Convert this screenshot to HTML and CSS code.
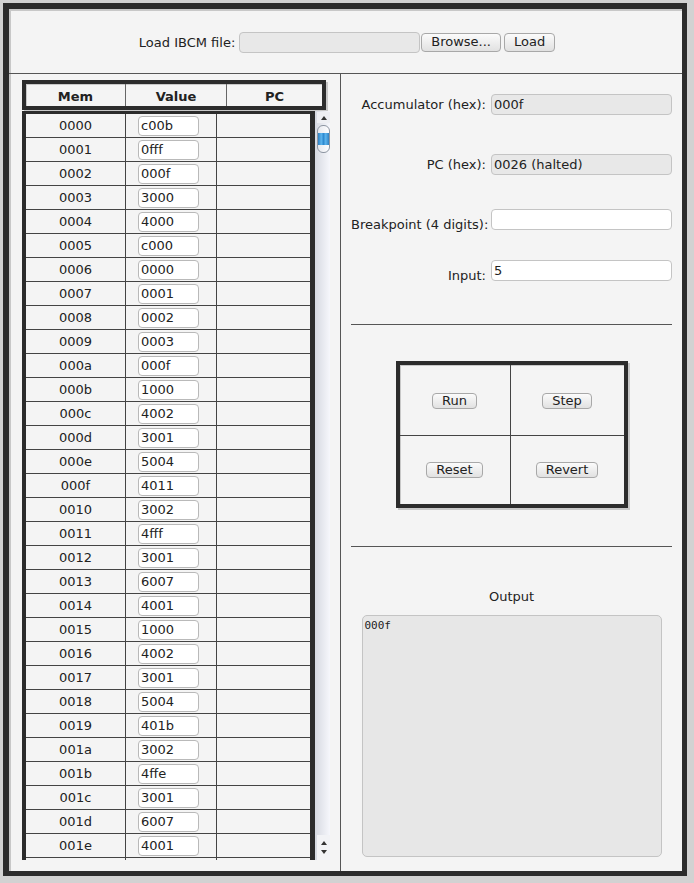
FILE: index.html
```html
<!DOCTYPE html>
<html>
<head>
    <meta name="viewport" content="width=device-width, initial-scale=1.0">
    <link rel="stylesheet" href="styles.css">
</head>
<body>
    <div class="frame">
        <div class="loader">
            <span class="loader-label">Load IBCM file:</span>
            <span class="file-box"></span>
            <button class="btn btn-tall">Browse...</button>
            <button class="btn btn-tall load-btn">Load</button>
        </div>
        <div class="main">
            <div class="memory">
                <div class="mem-head">
                    <div class="head-cell head-mem">Mem</div>
                    <div class="head-cell head-val">Value</div>
                    <div class="head-cell head-pc">PC</div>
                </div>
                <div class="mem-scroll">
                    <div class="mem-table" id="memBody"></div>
                    <div class="scrollbar">
                        <div class="sb-top"><span class="tri-up"></span></div>
                        <div class="sb-thumb"><div class="sb-grip"></div></div>
                        <div class="sb-track"></div>
                        <div class="sb-bottom">
                            <span class="tri-up"></span>
                            <span class="tri-down"></span>
                        </div>
                    </div>
                </div>
            </div>
            <div class="controls">
                <div class="field field-acc">
                    <label class="field-label">Accumulator (hex):</label>
                    <input class="field-input readonly" value="000f" readonly>
                </div>
                <div class="field field-pc">
                    <label class="field-label">PC (hex):</label>
                    <input class="field-input readonly" value="0026 (halted)" readonly>
                </div>
                <div class="field field-bp">
                    <label class="field-label low">Breakpoint (4 digits):</label>
                    <input class="field-input" value="">
                </div>
                <div class="field field-in">
                    <label class="field-label low">Input:</label>
                    <input class="field-input" value="5">
                </div>
                <hr class="rule rule-top">
                <div class="run-grid">
                    <div class="run-cell cell-tl"><button class="btn">Run</button></div>
                    <div class="run-cell cell-tr"><button class="btn">Step</button></div>
                    <div class="run-cell cell-bl"><button class="btn">Reset</button></div>
                    <div class="run-cell cell-br"><button class="btn">Revert</button></div>
                </div>
                <hr class="rule rule-bottom">
                <div class="output-label">Output</div>
                <textarea class="output" readonly>000f</textarea>
            </div>
        </div>
    </div>

    <script>
        const memory = [
            'c00b', '0fff', '000f', '3000', '4000', 'c000', '0000', '0001',
            '0002', '0003', '000f', '1000', '4002', '3001', '5004', '4011',
            '3002', '4fff', '3001', '6007', '4001', '1000', '4002', '3001',
            '5004', '401b', '3002', '4ffe', '3001', '6007', '4001', '1000'
        ];

        const memBody = document.getElementById('memBody');
        memory.forEach((value, addr) => {
            const row = document.createElement('div');
            row.className = 'mem-row';
            row.innerHTML = `
                <div class="mem-addr">${addr.toString(16).padStart(4, '0')}</div>
                <div class="mem-val"><input class="cell-input" value="${value}"></div>
                <div class="mem-pc"></div>
            `;
            memBody.appendChild(row);
        });
    </script>
</body>
</html>
```

FILE: styles.css
```css
body {
    margin: 0;
    background: #d2d2d2;
    font-family: "DejaVu Sans", Verdana, sans-serif;
    font-size: 13px;
    color: #222;
}
.frame {
    margin: 3px 0 0 3px;
    width: 684px;
    height: 873px;
    box-sizing: border-box;
    border-style: solid;
    border-color: #2c2c2c;
    border-width: 6px 5px 5px 6px;
    box-shadow: inset 2px 2px 0 #c8c8c8;
    background: #f4f4f4;
    display: flex;
    flex-direction: column;
}
.loader {
    height: 65px;
    flex-shrink: 0;
    box-sizing: border-box;
    padding: 2px 0 0 3px;
    border-bottom: 1px solid #555;
    display: flex;
    align-items: center;
    justify-content: center;
}
.loader-label {
    margin-right: 4px;
}
.file-box {
    width: 179px;
    height: 19px;
    background: #e8e8e8;
    border: 1px solid #c4c4c4;
    border-radius: 4px;
    margin-right: 1px;
}
.load-btn {
    margin-left: 3px;
}
.btn {
    font-family: "DejaVu Sans", Verdana, sans-serif;
    font-size: 13px;
    color: #222;
    background: linear-gradient(#fbfbfb, #e1e1e1);
    border: 1px solid #a8a8a8;
    border-radius: 4px;
    padding: 0 9px;
    height: 16px;
    line-height: 14px;
    cursor: pointer;
}
.btn-tall {
    height: 19px;
    line-height: 16px;
}
.main {
    flex: 1;
    display: flex;
    min-height: 0;
}
.memory {
    width: 332px;
    box-sizing: border-box;
    padding: 6px 0 0 13px;
    border-right: 1px solid #555;
}
.mem-head {
    width: 304px;
    height: 30px;
    box-sizing: border-box;
    border: 4px solid #2c2c2c;
    box-shadow: 2px 2px 0 #c8c8c8, inset 1px 1px 0 #c8c8c8;
    display: flex;
}
.head-cell {
    font-weight: bold;
    text-align: center;
    line-height: 19px;
    padding-top: 3px;
}
.head-mem {
    width: 100px;
    box-sizing: border-box;
    border-right: 1px solid #666;
}
.head-val {
    width: 101px;
    box-sizing: border-box;
    border-right: 1px solid #666;
}
.head-pc {
    flex: 1;
}
.mem-scroll {
    margin-top: 1px;
    width: 308px;
    height: 749px;
    display: flex;
}
.mem-table {
    width: 293px;
    box-sizing: border-box;
    border-style: solid;
    border-color: #2c2c2c;
    border-width: 3px 5px 0 4px;
    overflow: hidden;
}
.mem-row {
    display: flex;
    height: 24px;
    flex-shrink: 0;
    box-sizing: border-box;
    border-bottom: 1px solid #444;
}
.mem-addr {
    width: 100px;
    box-sizing: border-box;
    border-right: 1px solid #444;
    text-align: center;
    line-height: 23px;
}
.mem-val {
    width: 91px;
    box-sizing: border-box;
    border-right: 1px solid #444;
    padding-left: 12px;
    display: flex;
    align-items: center;
}
.mem-pc {
    flex: 1;
}
.cell-input {
    width: 61px;
    height: 20px;
    box-sizing: border-box;
    border: 1px solid #b9b9b9;
    border-radius: 4px;
    background: #fff;
    padding: 0 2px;
    font-family: "DejaVu Sans", Verdana, sans-serif;
    font-size: 13px;
    color: #222;
}
.scrollbar {
    width: 15px;
    display: flex;
    flex-direction: column;
    background: linear-gradient(to right, #d6d9e1, #f6f7fc);
}
.sb-top {
    height: 11px;
    margin: 1px 0 0 2px;
    background: #eeeff3;
    display: flex;
    justify-content: center;
    align-items: center;
}
.tri-up, .tri-down {
    width: 0;
    height: 0;
    border-left: 3px solid transparent;
    border-right: 3px solid transparent;
}
.tri-up {
    border-bottom: 4px solid #333;
}
.tri-down {
    border-top: 4px solid #333;
}
.sb-thumb {
    margin: 2px 0 0 2px;
    height: 28px;
    box-sizing: border-box;
    border: 1px solid #8d95a2;
    border-radius: 6px;
    background: linear-gradient(to right, #e6e8ee, #fdfdff);
    display: flex;
    align-items: center;
}
.sb-grip {
    height: 12px;
    width: 100%;
    background: linear-gradient(to right, #2f7fc0, #5cb4ee 30%, #2f8ad0 50%, #5cb4ee 70%, #2f7fc0);
}
.sb-track {
    flex: 1;
}
.sb-bottom {
    height: 25px;
    margin-left: 2px;
    background: #f2f3f6;
    display: flex;
    flex-direction: column;
    align-items: center;
    justify-content: space-evenly;
}
.controls {
    flex: 1;
    padding: 0 10px;
    display: flex;
    flex-direction: column;
}
.field {
    display: flex;
    align-items: flex-start;
    gap: 5px;
    height: 21px;
}
.field-acc {
    margin-top: 20px;
}
.field-pc {
    margin-top: 39px;
}
.field-bp {
    margin-top: 34px;
}
.field-in {
    margin-top: 30px;
}
.field-label {
    width: 135px;
    text-align: right;
    line-height: 15px;
    padding-top: 3px;
    white-space: nowrap;
}
.field-label.low {
    padding-top: 8px;
}
.field-input {
    width: 181px;
    height: 21px;
    box-sizing: border-box;
    border: 1px solid #c4c4c4;
    border-radius: 4px;
    background: #fff;
    padding: 0 2px;
    font-family: "DejaVu Sans", Verdana, sans-serif;
    font-size: 13px;
    color: #222;
    margin: 0;
}
.field-input.readonly {
    background: #e8e8e8;
}
.rule {
    border: 0;
    border-top: 1px solid #555;
    margin: 0;
    width: 100%;
}
.rule-top {
    margin-top: 43px;
}
.rule-bottom {
    margin-top: 38px;
}
.run-grid {
    margin: 36px auto 0;
    width: 232px;
    height: 147px;
    box-sizing: border-box;
    border: 4px solid #2c2c2c;
    box-shadow: 2px 2px 0 #c8c8c8, inset 1px 1px 0 #c8c8c8;
    display: grid;
    grid-template-columns: 111px 113px;
    grid-template-rows: 71px 68px;
}
.run-cell {
    display: flex;
    align-items: center;
    justify-content: center;
    box-sizing: border-box;
}
.cell-tl {
    border-right: 1px solid #444;
    border-bottom: 1px solid #444;
    padding-top: 1px;
}
.cell-tr {
    border-bottom: 1px solid #444;
    padding-top: 1px;
}
.cell-bl {
    border-right: 1px solid #444;
}
.output-label {
    margin-top: 42px;
    text-align: center;
    line-height: 15px;
}
.output {
    margin: 11px auto 0;
    width: 300px;
    height: 242px;
    box-sizing: border-box;
    border: 1px solid #c4c4c4;
    border-radius: 5px;
    background: #e7e7e7;
    padding: 3px 2px;
    font-family: "DejaVu Sans Mono", monospace;
    font-size: 11px;
    color: #222;
    resize: none;
}
```
